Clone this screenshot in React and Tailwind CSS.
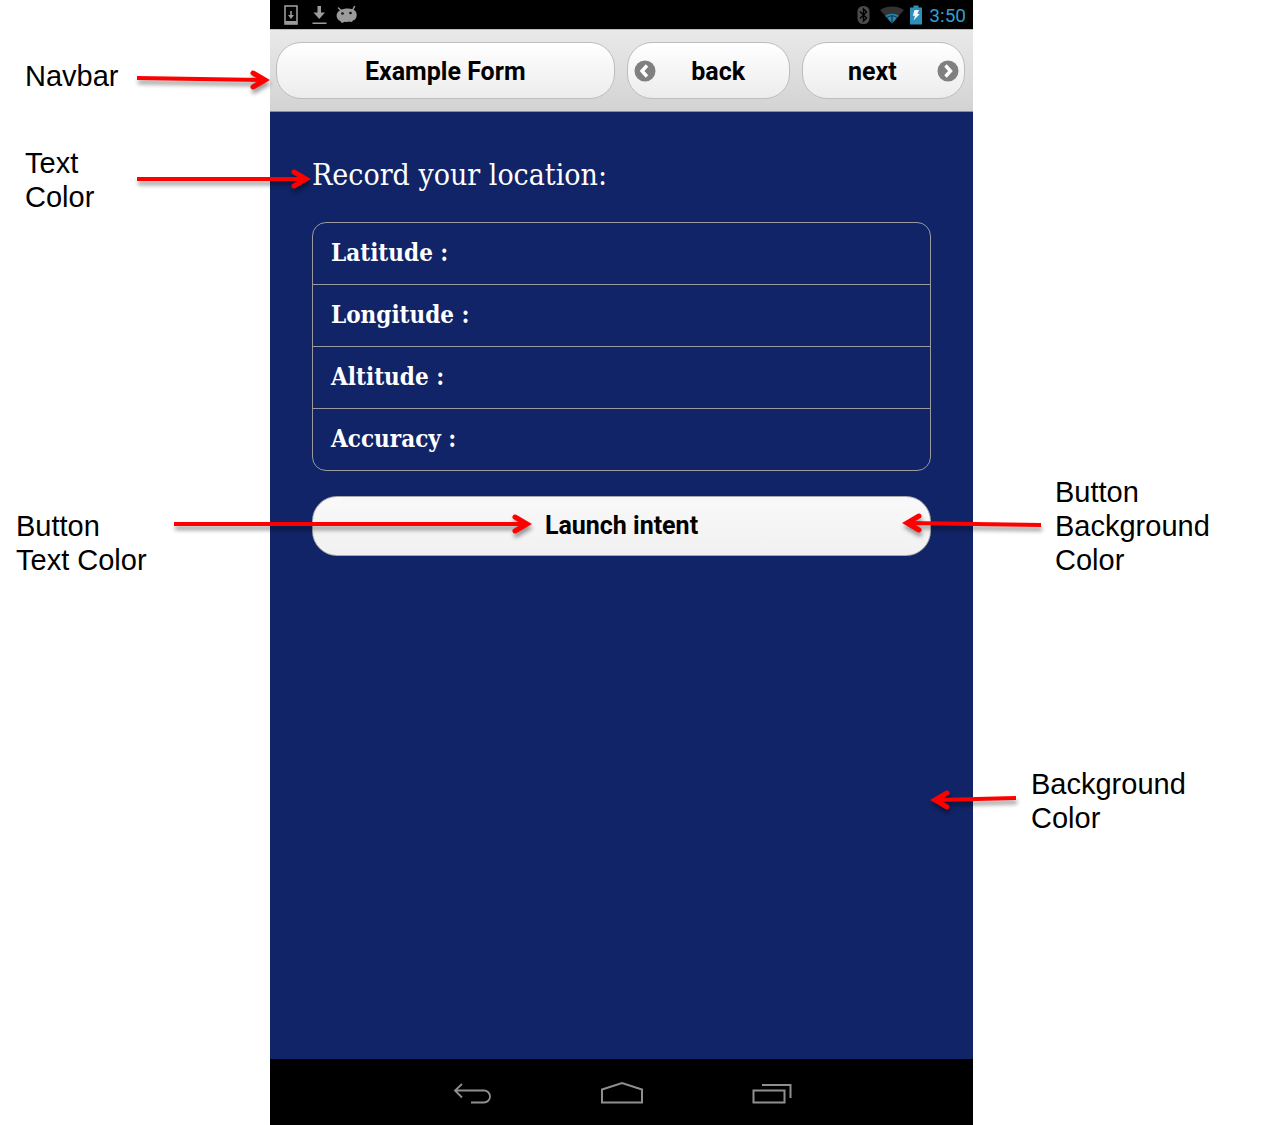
import React from "react";

function Arrow({ className, width, rise = 0, left = false }) {
  const tipY = 20 + rise;
  return (
    <svg
      className={`pointer-events-none absolute z-10 overflow-visible drop-shadow-[1px_4px_2px_rgba(0,0,0,0.4)] ${className}`}
      width={width}
      height="40"
      fill="none"
      stroke="#ff0000"
      aria-hidden="true"
    >
      <g transform={left ? `translate(${width} 0) scale(-1 1)` : undefined}>
        <path d={`M0 20L${width - 7} ${tipY}`} strokeWidth="4" />
        <path
          d={`M${width - 17} ${tipY - 7}L${width - 5} ${tipY}L${width - 17} ${tipY + 7}`}
          strokeWidth="5"
          strokeLinecap="round"
          strokeMiterlimit="8"
        />
      </g>
    </svg>
  );
}

function Note({ lines, className, children }) {
  return (
    <div className={`relative text-[29px] leading-[34px] ${className}`}>
      {lines.map((line) => (
        <p key={line} className="whitespace-nowrap">{line}</p>
      ))}
      {children}
    </div>
  );
}

function StatusBar() {
  return (
    <div className="flex h-[29px] shrink-0 items-center justify-between bg-black pl-[14px] pr-[7px]">
      <div className="flex items-center gap-[10px] text-[#9b9b9b]">
        <svg width="15" height="20" viewBox="0 0 15 20" fill="none" stroke="currentColor">
          <rect x="1" y="1" width="12" height="18" strokeWidth="1.6" />
          <path d="M1 17.5h12" strokeWidth="3" />
          <path d="M7 6v5" strokeWidth="1.6" />
          <path d="M4 10h6l-3 4z" fill="currentColor" stroke="none" />
        </svg>
        <svg width="20" height="20" viewBox="0 0 20 20" fill="currentColor">
          <path d="M8.5 1h3.500v6.500h4l-5.750 6.500-5.750-6.500h4zM3.500 17.500h14v1.500h-14z" />
        </svg>
        <svg className="-ml-[3px]" width="22" height="20" viewBox="0 0 22 20">
          <path d="M4.500 5 2.500 3M17 4.500l1.500-3" stroke="currentColor" strokeWidth="1.500" strokeLinecap="round" />
          <path d="M4.500 5C8 3.300 13 3 16.500 4.200c2 .4 4.500 2.700 4.200 6.200-.2 3-2 4.700-3.700 5.200-.8 1.500-2 1.800-3.200.9-1.800.5-3.800.6-5.500.3-1.500 1.700-3.300 1.200-3.700-.6C2 15.200.3 12.800.6 10.300c.2-2.500 1.900-4.300 3.900-5.300z" fill="currentColor" />
          <circle cx="6.500" cy="8.500" r="1.300" fill="#111" />
          <circle cx="14.500" cy="8" r="1.300" fill="#111" />
        </svg>
      </div>
      <div className="flex items-center">
        <svg width="13" height="20" viewBox="0 0 13 20" fill="none">
          <rect x="0.500" y="1" width="12" height="18" rx="5.500" fill="#4a4a4a" />
          <path d="M3 6.500l6.500 6.500-3 3V4l3 3L3 13.500" stroke="#000" strokeWidth="1.400" />
        </svg>
        <svg className="ml-[10px]" width="24" height="18" viewBox="0 0 24 18">
          <path d="M12 17.500 0 4C7-.6 17-.6 24 4z" fill="#333" />
          <path d="M12 17.500 5.200 9.800c4-2.900 9.600-2.900 13.600 0z" fill="#2787b0" />
          <path d="M7 11.500c3-2.200 7-2.200 10 0M12 10v7" stroke="#0b2a38" fill="none" strokeWidth="1" />
        </svg>
        <svg className="ml-[6px]" width="12" height="20" viewBox="0 0 12 20">
          <path d="M3.500 0.500h5v2H12v17H0v-17h3.500z" fill="#2e8fb8" />
          <path d="M4.500 5h4.500l-1.500 4h2.300L3.500 15.500 5 10.700H2.800z" fill="#eef8fc" />
        </svg>
        <span className="ml-[7px] pt-[3px] text-[19px] leading-[24px] text-[#2f9fd0]">3:50</span>
      </div>
    </div>
  );
}

function Chevron({ flip, className }) {
  return (
    <svg className={`absolute top-1/2 -mt-[11px] ${className}`} width="22" height="22" viewBox="0 0 22 22" fill="none">
      <circle cx="11" cy="11" r="10.500" fill="#808080" />
      <path
        d={flip ? "M8.500 5.500 13.500 11l-5 5.500" : "M13 5.500 8 11l5 5.500"}
        stroke="#fff"
        strokeWidth="3.400"
      />
    </svg>
  );
}

const navButton =
  "relative mx-[6px] h-[57px] rounded-[25px] border border-[#bdbdbd] bg-linear-to-b from-white to-[#ececec] pt-[2px] text-[25px] font-bold leading-[30px] text-black";

const fields = ["Latitude :", "Longitude :", "Altitude :", "Accuracy :"];

export default function App() {
  return (
    <div className="grid min-h-screen grid-cols-[270px_minmax(0,1fr)_289px] overflow-x-hidden bg-white font-['Liberation_Sans',sans-serif] text-black">
      <aside className="pt-[59px]">
        <Note lines={["Navbar"]} className="pl-[25px]">
          <Arrow className="left-[137px] -top-[1px]" width={133} rise={2} />
        </Note>
        <Note lines={["Text", "Color"]} className="mt-[53px] pl-[25px]">
          <Arrow className="left-[137px] top-[13px]" width={174} />
        </Note>
        <Note lines={["Button", "Text Color"]} className="mt-[295px] pl-[16px]">
          <Arrow className="left-[174px] -top-[5px]" width={358} />
        </Note>
      </aside>

      <main className="flex flex-col bg-[#112467] font-[Roboto,sans-serif]">
        <StatusBar />
        <nav className="grid grid-cols-[2fr_1fr_1fr] border-y border-t-[#bcbcbc] border-b-[#8f8f8f] bg-linear-to-b from-[#e9e9e9] to-[#d3d3d3] py-[12px] pr-[2px]">
          <button type="button" className={navButton}>Example Form</button>
          <button type="button" className={`${navButton} pl-[20px]`}>
            <Chevron className="left-[6px]" />
            back
          </button>
          <button type="button" className={`${navButton} pr-[22px]`}>
            next
            <Chevron flip className="right-[5px]" />
          </button>
        </nav>

        <section className="flex-1 px-[42px] pt-[43px] text-white">
          <h1 className="font-['DejaVu_Serif_Condensed','DejaVu_Serif',serif] text-[30px] leading-[40px]">
            Record your location:
          </h1>
          <dl className="mt-[27px] divide-y divide-[#9a9a9f] rounded-[14px] border border-[#9a9a9f] font-['DejaVu_Serif_Condensed','DejaVu_Serif',serif] text-[24px] leading-[30px]">
            {fields.map((f) => (
              <div key={f} className="flex h-[62px] items-center px-[18px] pb-[2px] last:h-[61px]">
                <dt className="font-bold">{f}</dt>
                <dd />
              </div>
            ))}
          </dl>
          <button
            type="button"
            className="mt-[25px] h-[60px] w-full rounded-[25px] border border-[#a9a9a9] bg-linear-to-b from-[#f9f9f9] to-[#f1f1f1] text-[25px] font-bold leading-[30px] text-black"
          >
            Launch intent
          </button>
        </section>

        <footer className="flex h-[66px] items-center justify-center bg-black pt-[2px] text-[#8f8f8f]">
          <button type="button" aria-label="Back" className="flex h-full w-[150px] items-center justify-center">
            <svg width="40" height="24" viewBox="0 0 40 24" fill="none" stroke="currentColor" strokeWidth="1.800">
              <path d="M10 3 3 9.500 10 16.500M3 9.500H32a6 6 0 0 1 0 12H19" />
            </svg>
          </button>
          <button type="button" aria-label="Home" className="flex h-full w-[150px] items-center justify-center">
            <svg width="42" height="24" viewBox="0 0 42 24" fill="none" stroke="currentColor" strokeWidth="2">
              <path d="M1 21.500V8.500L21 2l20 6.500v13z" />
            </svg>
          </button>
          <button type="button" aria-label="Recent apps" className="flex h-full w-[150px] items-center justify-center">
            <svg width="40" height="24" viewBox="0 0 40 24" fill="none" stroke="currentColor" strokeWidth="2">
              <path d="M1.500 9.500h31v12h-31zM10 4h28.500v13" />
            </svg>
          </button>
        </footer>
      </main>

      <aside className="pt-[475px]">
        <Note lines={["Button", "Background", "Color"]} className="pl-[82px]">
          <Arrow left className="-left-[71px] top-[30px]" width={139} rise={-2} />
        </Note>
        <Note lines={["Background", "Color"]} className="mt-[190px] pl-[58px]">
          <Arrow left className="-left-[43px] top-[11px]" width={86} rise={2} />
        </Note>
      </aside>
    </div>
  );
}
